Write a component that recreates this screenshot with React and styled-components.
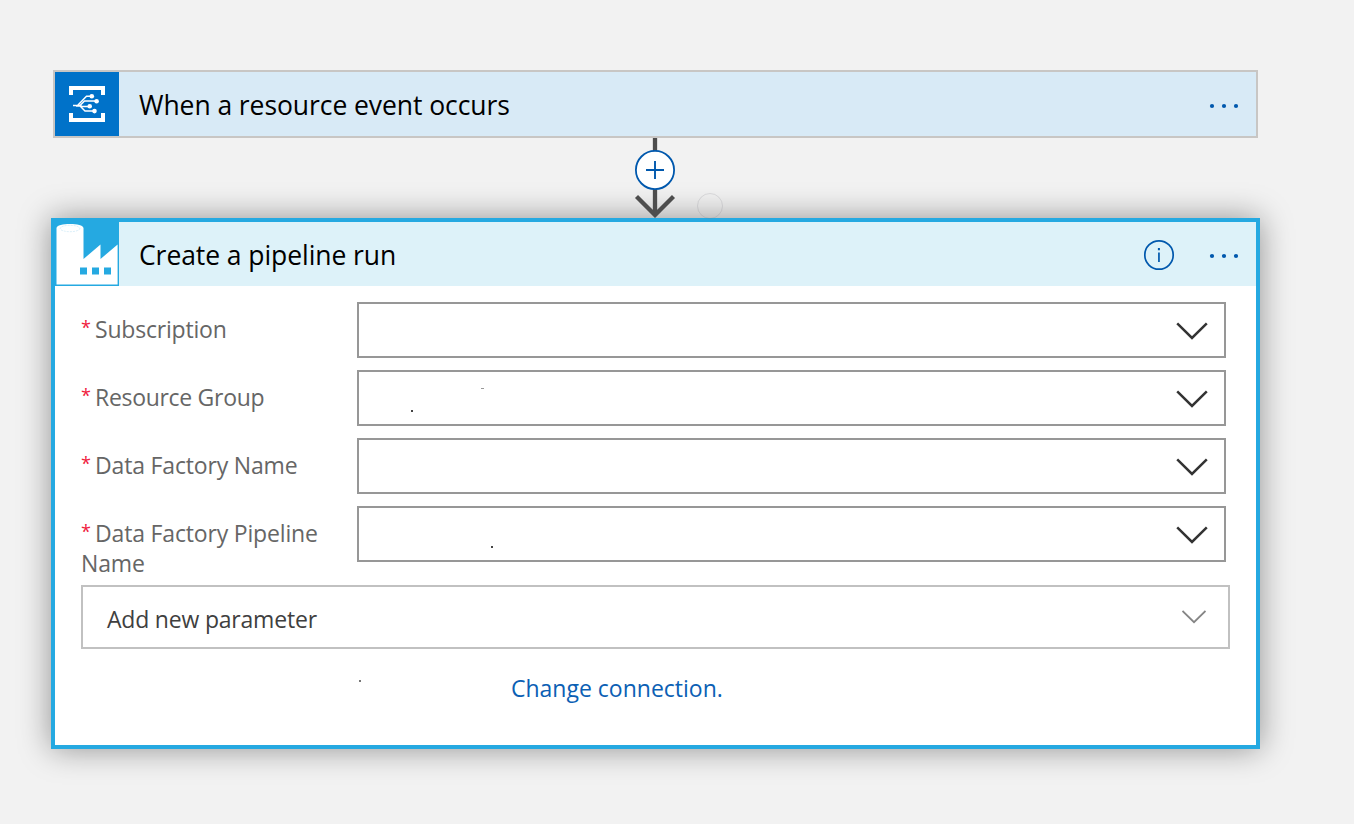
import React from 'react';
import styled, { createGlobalStyle } from 'styled-components';

const GlobalStyle = createGlobalStyle`
  * { box-sizing: border-box; }
  body {
    margin: 0;
    background: #f2f2f2;
    font-family: "Open Sans", "Noto Sans", sans-serif;
    overflow: hidden;
  }
  svg { display: block; }
`;

const Canvas = styled.main`
  display: flex;
  flex-direction: column;
  width: 1209px;
  height: 824px;
  margin-left: 51px;
  padding-top: 70px;
`;

const TriggerCard = styled.section`
  margin: 0 2px;
  border: 2px solid #c8c6c4;
  background: #d8eaf6;
`;

const ActionCard = styled.section`
  height: 531px;
  border: 4px solid #25a9e1;
  background: #fff;
  box-shadow: 0 0 30px rgba(0, 0, 0, 0.4);
`;

const CardHeader = styled.header`
  display: flex;
  align-items: center;
  height: 64px;
  padding-right: 15px;
  background: ${(p) => p.$background};
`;

const CardTitle = styled.h2`
  flex: 1;
  margin: 2px 0 0 20px;
  font-size: 26.5px;
  font-weight: 400;
  line-height: 36px;
  letter-spacing: -0.07px;
  color: #000;
  white-space: nowrap;
`;

const IconButton = styled.button`
  display: flex;
  margin: 0 0 0 ${(p) => p.$gap || '0'};
  padding: 0;
  border: 0;
  background: none;
`;

const Connector = styled.div`
  position: relative;
  display: flex;
  justify-content: center;
  height: 80px;
  padding-right: 1px;
`;

const DropHint = styled.span`
  position: absolute;
  z-index: 1;
  left: 646px;
  top: 55px;
  width: 26px;
  height: 26px;
  border: 1px solid rgba(120, 120, 130, 0.2);
  border-radius: 50%;
`;

const Fields = styled.div`
  display: flex;
  flex-direction: column;
  gap: 12px;
  height: 299px;
  padding: 16px 30px 0 26px;
`;

const FieldRow = styled.div`
  display: flex;
  height: 56px;
`;

const FieldLabel = styled.label`
  flex: 0 0 276px;
  padding: 12px 20px 0 0;
  font-size: 23px;
  line-height: 30px;
  letter-spacing: ${(p) => p.$spacing};
  color: #666;
`;

const Required = styled.span`
  display: inline-block;
  width: 14px;
  height: 20px;
  font-size: 18px;
  letter-spacing: 0;
  line-height: 20px;
  vertical-align: 4px;
  color: #f0203c;
`;

const Select = styled.div`
  display: flex;
  flex: 1;
  align-items: center;
  justify-content: space-between;
  padding-right: 16px;
  border: 2px solid #979797;
  background: #fff;
`;

const Residue = styled.svg`
  width: 200px;
  height: 52px;
`;

const ParameterPicker = styled.div`
  display: flex;
  align-items: center;
  justify-content: space-between;
  height: 64px;
  margin: 0 26px;
  padding: 0 22px 0 24px;
  border: 2px solid #c1c1c1;
  font-size: 23px;
  line-height: 30px;
  letter-spacing: -0.2px;
  color: #3f3f3f;
`;

const ParameterText = styled.span`
  padding-top: 3px;
`;

const Footer = styled.footer`
  display: flex;
  align-items: center;
  padding: 23px 26px 0 304px;
`;

const ConnectionLink = styled.a`
  margin-left: 148px;
  font-size: 23px;
  line-height: 32px;
  letter-spacing: 0;
  color: #0b60b4;
`;

const EventGridIcon = () => (
  <svg width="64" height="64" viewBox="0 0 64 64">
    <path fill="#0072c9" d="M0 0h64v64H0z" />
    <path fill="#fff" d="M14 14h36v9h-4v-5H18v5h-4zM14 50h36v-9h-4v5H18v-5h-4z" />
    <g fill="none" stroke="#fff" strokeWidth="1.4">
      <path d="M18 33.5h4.500l9-9.300h5.500M21 34l3.500 0 5-5h12M22 33.500l3.500 0 1.500 1h8M22 34h3l5 5h9" />
    </g>
    <g fill="#fff">
      <circle cx="36.800" cy="24.200" r="2.300" />
      <circle cx="41.600" cy="29.200" r="2.300" />
      <circle cx="34.700" cy="34.200" r="2.300" />
      <circle cx="39.500" cy="39.100" r="2.300" />
    </g>
  </svg>
);

const DataFactoryIcon = () => (
  <svg width="64" height="64" viewBox="0 0 64 64">
    <path fill="#25a9e1" d="M0 0h64v64H0z" />
    <path fill="#fff" d="M1.500 6C1.500 0.500 28.500 0.500 28.500 6v31L45.500 22.500V37L62.600 22.500V62.500H1.500z" />
    <ellipse cx="15" cy="6.500" rx="9.800" ry="3.200" fill="none" stroke="#c9e7f5" strokeWidth=".7" strokeDasharray="2 1" />
    <path fill="#25a9e1" d="M25 45.500h7v7h-7zM37 45.500h7v7h-7zM49 45.500h7v7h-7z" />
  </svg>
);

const MoreIcon = () => (
  <svg width="34" height="34" viewBox="0 0 34 34" fill="#0058ad">
    <circle cx="5" cy="19" r="2.100" />
    <circle cx="17" cy="19" r="2.100" />
    <circle cx="29" cy="19" r="2.100" />
  </svg>
);

const InfoIcon = () => (
  <svg width="32" height="34" viewBox="0 0 32 34">
    <circle cx="16" cy="18" r="14.200" fill="none" stroke="#0058ad" strokeWidth="1.700" />
    <path fill="#0058ad" d="M14.900 11h2v2.200h-2zM15.100 15.600h1.700V25h-1.700z" />
  </svg>
);

const InsertArrow = () => (
  <svg width="44" height="80" viewBox="0 0 44 80">
    <path d="M22 0v77M3.500 58.500L22 77l18.500-18.500" fill="none" stroke="#4d4d4d" strokeWidth="4.300" />
    <circle cx="22" cy="32" r="19.100" fill="#fff" stroke="#0058ad" strokeWidth="1.800" />
    <path d="M13 32h18M22 23v18" stroke="#0058ad" strokeWidth="1.900" />
  </svg>
);

const Chevron = () => (
  <svg width="32" height="20" viewBox="0 0 32 20">
    <path d="M1.200 3.300L16 18l14.800-14.700" fill="none" stroke="#333" strokeWidth="2.500" />
  </svg>
);

const SmallChevron = () => (
  <svg width="24" height="16" viewBox="0 0 24 16">
    <path d="M.5 2L12 13.200 23.500 2" fill="none" stroke="#858585" strokeWidth="1.800" />
  </svg>
);

const fields = [
  { label: 'Subscription', spacing: '-0.2px', marks: [] },
  { label: 'Resource Group', spacing: '-0.3px', marks: [[52, 38, 2, 2], [122, 16, 3, 1]] },
  { label: 'Data Factory Name', spacing: '-0.17px', marks: [] },
  { label: 'Data Factory Pipeline Name', spacing: '-0.17px', marks: [[132, 38, 2, 2]] },
];

export default function App() {
  return (
    <>
      <GlobalStyle />
      <Canvas>
        <TriggerCard>
          <CardHeader $background="#d8eaf6">
            <EventGridIcon />
            <CardTitle>When a resource event occurs</CardTitle>
            <IconButton aria-label="More"><MoreIcon /></IconButton>
          </CardHeader>
        </TriggerCard>
        <Connector>
          <InsertArrow />
          <DropHint />
        </Connector>
        <ActionCard>
          <CardHeader $background="#ddf2f9">
            <DataFactoryIcon />
            <CardTitle>Create a pipeline run</CardTitle>
            <IconButton aria-label="Information"><InfoIcon /></IconButton>
            <IconButton $gap="32px" aria-label="More"><MoreIcon /></IconButton>
          </CardHeader>
          <Fields>
            {fields.map(({ label, spacing, marks }) => (
              <FieldRow key={label}>
                <FieldLabel $spacing={spacing}>
                  <Required>*</Required>{label}
                </FieldLabel>
                <Select>
                  <Residue>
                    {marks.map(([x, y, w, h]) => (
                      <rect key={x} x={x} y={y} width={w} height={h} fill={h === 1 ? '#999' : '#444'} />
                    ))}
                  </Residue>
                  <Chevron />
                </Select>
              </FieldRow>
            ))}
          </Fields>
          <ParameterPicker>
            <ParameterText>Add new parameter</ParameterText>
            <SmallChevron />
          </ParameterPicker>
          <Footer>
            <svg width="4" height="32">
              <rect y="8" width="2" height="2" fill="#777" />
            </svg>
            <ConnectionLink>Change connection.</ConnectionLink>
          </Footer>
        </ActionCard>
      </Canvas>
    </>
  );
}
